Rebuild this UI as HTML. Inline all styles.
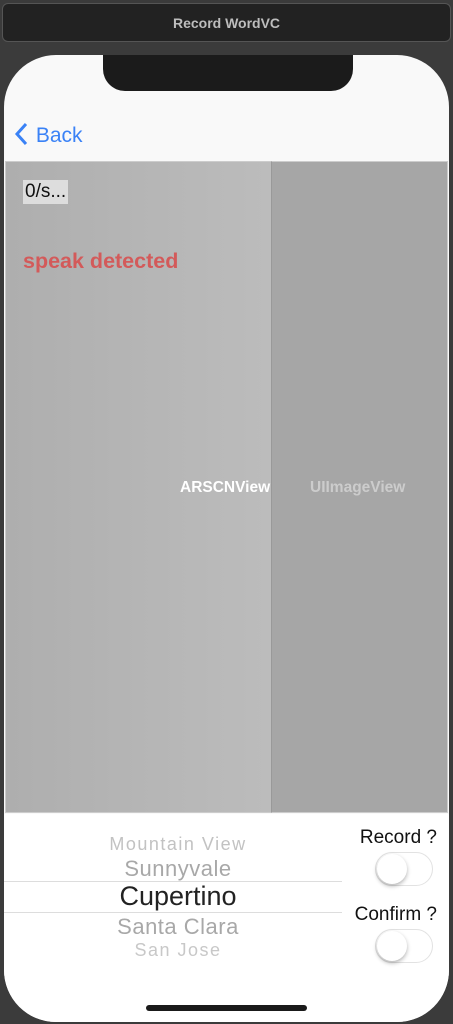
<!DOCTYPE html><html><head><style>
body{margin:0;width:453px;height:1024px;background:#3b3b3b;position:relative;overflow:hidden;font-family:"Liberation Sans",sans-serif}
.t{position:absolute;left:2px;top:3px;width:447px;height:37px;background:#222;border:1px solid #555;border-radius:6px;color:#bdbdbd;font-weight:bold;font-size:14px;text-align:center;line-height:38px}
.ph{position:absolute;left:4px;top:55px;width:445px;height:967px;background:#f9f9f9;border-radius:52px;overflow:hidden}
.notch{position:absolute;left:99px;top:0;width:250px;height:36px;background:#1b1b1b;border-radius:0 0 22px 22px}
.back{position:absolute;left:10px;top:67px;color:#3a82f6;font-size:21px}
.g{position:absolute;top:106px;height:652px;box-sizing:border-box}
.a{left:1px;width:267px;background:linear-gradient(90deg,#aeaeae,#bcbcbc);border:1px solid #ccc;border-right:1px solid #999}
.b{left:268px;width:176px;background:#a6a6a6;border:1px solid #ccc;border-left:none}
.bot{position:absolute;top:759px;left:0;width:445px;height:210px;background:#fff}
.p{position:absolute;left:0;width:348px;text-align:center}
.sw{position:absolute;left:371px;width:58px;height:34px;border-radius:17px;border:1px solid #e2e2e2;background:#fff;box-sizing:border-box}
.sw:after{content:"";position:absolute;left:1px;top:1px;width:30px;height:30px;border-radius:50%;background:#fff;box-shadow:0 2px 4px rgba(0,0,0,.3)}
</style></head><body>
<div class="t">Record WordVC</div>
<div class="ph">
<div class="notch"></div>
<div class="back"><svg width="16" height="24" viewBox="0 0 16 24" style="vertical-align:-4px"><path d="M12 2 L3 12 L12 22" stroke="#3a82f6" stroke-width="3" fill="none"/></svg> Back</div>
<div class="g a"><div style="position:absolute;left:17px;top:18px;background:#ddd;font-size:19px;padding:1px 2px;color:#111">0/s...</div>
<div style="position:absolute;left:17px;top:87px;color:#d35a5a;font-weight:bold;font-size:21.5px">speak detected</div>
<div style="position:absolute;left:174px;top:317px;color:#fff;font-weight:bold;font-size:15.5px">ARSCNView</div></div>
<div class="g b"><div style="position:absolute;left:38px;top:317px;color:#ccc;font-weight:bold;font-size:15.5px">UIImageView</div></div>
<div class="bot">
<div class="p" style="top:20px;font-size:18px;letter-spacing:1.5px;color:#c2c2c2">Mountain View</div>
<div class="p" style="top:42px;font-size:22px;letter-spacing:.5px;color:#a8a8a8">Sunnyvale</div>
<div style="position:absolute;left:0;top:67px;width:338px;height:30px;border-top:1px solid #ddd;border-bottom:1px solid #ddd"></div>
<div class="p" style="top:67px;font-size:27px;color:#222">Cupertino</div>
<div class="p" style="top:100px;font-size:22px;letter-spacing:.5px;color:#a8a8a8">Santa Clara</div>
<div class="p" style="top:126px;font-size:18px;letter-spacing:1.5px;color:#c8c8c8">San Jose</div>
<div style="position:absolute;right:12px;top:13px;font-size:19px;color:#111">Record ?</div>
<div class="sw" style="top:38px"></div>
<div style="position:absolute;right:12px;top:90px;font-size:19px;color:#111">Confirm ?</div>
<div class="sw" style="top:115px"></div>
<div style="position:absolute;left:142px;top:191px;width:161px;height:6px;border-radius:3px;background:#1a1a1a"></div>
</div>
</div>
</body></html>
